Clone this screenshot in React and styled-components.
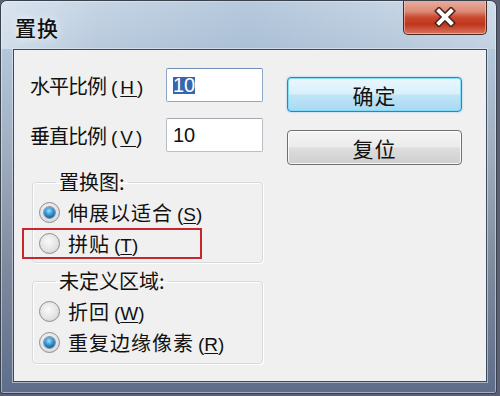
import styled, { createGlobalStyle, css } from "styled-components";

const GlobalStyle = createGlobalStyle`
  html, body {
    margin: 0;
    padding: 0;
    background: #5b6076;
  }
  body {
    font-family: "Noto Sans CJK SC", "Liberation Sans", sans-serif;
  }
`;

// 对话框外框
const Window = styled.div`
  box-sizing: border-box;
  width: 497px;
  height: 394px;
  display: flex;
  flex-direction: column;
  border: 1px solid #39414d;
  border-radius: 7px 7px 3px 3px;
  box-shadow: inset 0 0 0 1px rgba(255, 255, 255, 0.45);
  background: linear-gradient(
    180deg,
    #c8d6e5 0%,
    #b3c5d9 14%,
    #a0aec0 38%,
    #7f8a9d 68%,
    #5e6d8a 100%
  );
  overflow: hidden;
`;

const TitleBar = styled.div`
  height: 48px;
  flex: none;
  display: flex;
  align-items: flex-start;
  justify-content: space-between;
  background: linear-gradient(
    90deg,
    rgba(232, 240, 248, 0.55) 0%,
    rgba(190, 208, 226, 0.2) 20%,
    rgba(150, 176, 204, 0.35) 50%,
    rgba(190, 208, 226, 0.15) 80%,
    rgba(225, 235, 245, 0.3) 100%
  );
`;

const Title = styled.span`
  margin: 13px 0 0 14px;
  font-size: 21px;
  line-height: 26px;
  font-weight: 500;
  color: #111;
  letter-spacing: 1px;
  text-shadow: 0 0 8px rgba(255, 255, 255, 0.9);
`;

const CloseButton = styled.div`
  box-sizing: border-box;
  width: 84px;
  height: 36px;
  margin: -2px 9px 0 0;
  display: flex;
  align-items: center;
  justify-content: center;
  border: 1px solid #4a2a24;
  border-top: none;
  border-radius: 0 0 5px 5px;
  background: linear-gradient(
    180deg,
    #eab3a6 0%,
    #dd8b78 35%,
    #c94a31 52%,
    #c0351c 72%,
    #d9745f 100%
  );
  box-shadow: inset 0 0 0 1px rgba(255, 220, 210, 0.5);
`;

const Client = styled.div`
  flex: 1;
  display: flex;
  margin: 0 9px 11px 12px;
  border: 1px solid #3e4b5e;
  box-shadow: 0 0 0 1px rgba(225, 235, 245, 0.55);
  background: #f0f0f0;
`;

const LeftColumn = styled.div`
  width: 273px;
  display: flex;
  flex-direction: column;
  padding-top: 18px;
`;

const FieldRow = styled.div`
  display: flex;
  align-items: center;
  height: 34px;
  padding-left: 16px;
  margin-bottom: 16px;
`;

const Label = styled.span`
  width: 136px;
  font-size: 20px;
  color: #111;
  letter-spacing: -1px;
  white-space: nowrap;
`;

const Accel = styled.span`
  font-family: "Liberation Sans", sans-serif;
  font-size: 19px;
  margin-left: ${(p) => (p.$wide ? "5px" : "4px")};
  letter-spacing: ${(p) => (p.$wide ? "3px" : "0")};

  u {
    text-underline-offset: 2px;
  }
`;

const Input = styled.div`
  box-sizing: border-box;
  width: 97px;
  height: 34px;
  display: flex;
  align-items: center;
  padding-left: 6px;
  border: 1px solid ${(p) => (p.$focused ? "#8ea7c6" : "#b9bdc4")};
  border-top-color: ${(p) => (p.$focused ? "#6f8fb6" : "#a3a7ae")};
  border-radius: 2px;
  background: #fff;
  font-family: "Liberation Sans", sans-serif;
  font-size: 20px;
  color: #111;
`;

const Selected = styled.span`
  background: #3566b0;
  color: #fff;
  line-height: 17px;
`;

const Group = styled.fieldset`
  box-sizing: border-box;
  width: 231px;
  margin: 4px 0 0 18px;
  padding: 5px 0 0 6px;
  border: 1px solid #d6dade;
  border-radius: 4px;
  box-shadow: inset 1px 1px 0 #fff, 1px 1px 0 #fff;
  height: ${(p) => p.$height}px;

  & + & {
    margin-top: 8px;
  }
`;

const Legend = styled.legend`
  margin-left: 17px;
  padding: 0 3px;
  font-size: 20px;
  line-height: 20px;
  color: #111;
`;

const RadioRow = styled.div`
  position: relative;
  display: flex;
  align-items: center;
  height: 31px;
  gap: 8px;
  font-size: 20px;
  color: #111;
  letter-spacing: 1px;

  ${(p) =>
    p.$highlight &&
    css`
      &::after {
        content: "";
        position: absolute;
        left: -17px;
        top: 0;
        width: 180px;
        height: 31px;
        box-sizing: border-box;
        border: 2px solid #c8262d;
      }
    `}
`;

const RadioCircle = styled.span`
  box-sizing: border-box;
  width: 21px;
  height: 21px;
  flex: none;
  display: flex;
  align-items: center;
  justify-content: center;
  border-radius: 50%;
  border: 1px solid #8c8e90;
  background: radial-gradient(circle at 45% 40%, #fafafa 0%, #e4e4e4 55%, #c9c9c9 100%);

  ${(p) =>
    p.$checked &&
    css`
      &::before {
        content: "";
        width: 11px;
        height: 11px;
        border-radius: 50%;
        background: radial-gradient(
          circle at 45% 35%,
          #9ee0fb 0%,
          #3c9bd6 40%,
          #165f99 75%,
          #0e3f6a 100%
        );
        box-shadow: 0 0 0 1px rgba(20, 60, 100, 0.5);
      }
    `}
`;

const RightColumn = styled.div`
  display: flex;
  flex-direction: column;
  gap: 18px;
  padding-top: 27px;
`;

const Button = styled.div`
  box-sizing: border-box;
  width: 175px;
  height: 35px;
  display: flex;
  align-items: center;
  justify-content: center;
  border-radius: 4px;
  font-size: 21px;
  color: #111;
  letter-spacing: 1px;
  border: 1px solid ${(p) => (p.$primary ? "#3b7fb4" : "#707070")};
  background: ${(p) =>
    p.$primary
      ? "linear-gradient(180deg, #eaf7fd 0%, #d9f0fb 48%, #bfe4f7 52%, #a9d9f2 100%)"
      : "linear-gradient(180deg, #f4f4f4 0%, #ebebeb 48%, #dddddd 52%, #cfcfcf 100%)"};
  box-shadow: inset 0 0 0 1px
      ${(p) => (p.$primary ? "rgba(120, 220, 250, 0.9)" : "rgba(255, 255, 255, 0.8)")}
    ${(p) => (p.$primary ? ", 0 0 2px rgba(60, 140, 200, 0.5)" : "")};
`;

const fields = [
  { label: "水平比例", key: "H", value: "10", focused: true },
  { label: "垂直比例", key: "V", value: "10" },
];

const groups = [
  {
    title: "置换图:",
    height: 91,
    items: [
      { text: "伸展以适合", key: "S", checked: true },
      { text: "拼贴", key: "T", highlight: true },
    ],
  },
  {
    title: "未定义区域:",
    height: 93,
    items: [
      { text: "折回", key: "W" },
      { text: "重复边缘像素", key: "R", checked: true },
    ],
  },
];

const CloseIcon = () => (
  <svg width="24" height="20" viewBox="0 0 24 20">
    <g strokeLinecap="square">
      <line x1="6" y1="4" x2="18" y2="16" stroke="#4a2418" strokeWidth="7" />
      <line x1="18" y1="4" x2="6" y2="16" stroke="#4a2418" strokeWidth="7" />
      <line x1="6" y1="4" x2="18" y2="16" stroke="#fff" strokeWidth="4" />
      <line x1="18" y1="4" x2="6" y2="16" stroke="#fff" strokeWidth="4" />
    </g>
  </svg>
);

export default function App() {
  return (
    <>
      <GlobalStyle />
      <Window>
        <TitleBar>
          <Title>置换</Title>
          <CloseButton>
            <CloseIcon />
          </CloseButton>
        </TitleBar>
        <Client>
          <LeftColumn>
            {fields.map((f) => (
              <FieldRow key={f.key}>
                <Label>
                  {f.label}
                  <Accel $wide>
                    (<u>{f.key}</u>)
                  </Accel>
                </Label>
                <Input $focused={f.focused}>
                  {f.focused ? <Selected>{f.value}</Selected> : f.value}
                </Input>
              </FieldRow>
            ))}
            {groups.map((g) => (
              <Group key={g.title} $height={g.height}>
                <Legend>{g.title}</Legend>
                {g.items.map((item) => (
                  <RadioRow key={item.key} $highlight={item.highlight}>
                    <RadioCircle $checked={item.checked} />
                    <span>
                      {item.text}
                      <Accel>
                        (<u>{item.key}</u>)
                      </Accel>
                    </span>
                  </RadioRow>
                ))}
              </Group>
            ))}
          </LeftColumn>
          <RightColumn>
            <Button $primary>确定</Button>
            <Button>复位</Button>
          </RightColumn>
        </Client>
      </Window>
    </>
  );
}
